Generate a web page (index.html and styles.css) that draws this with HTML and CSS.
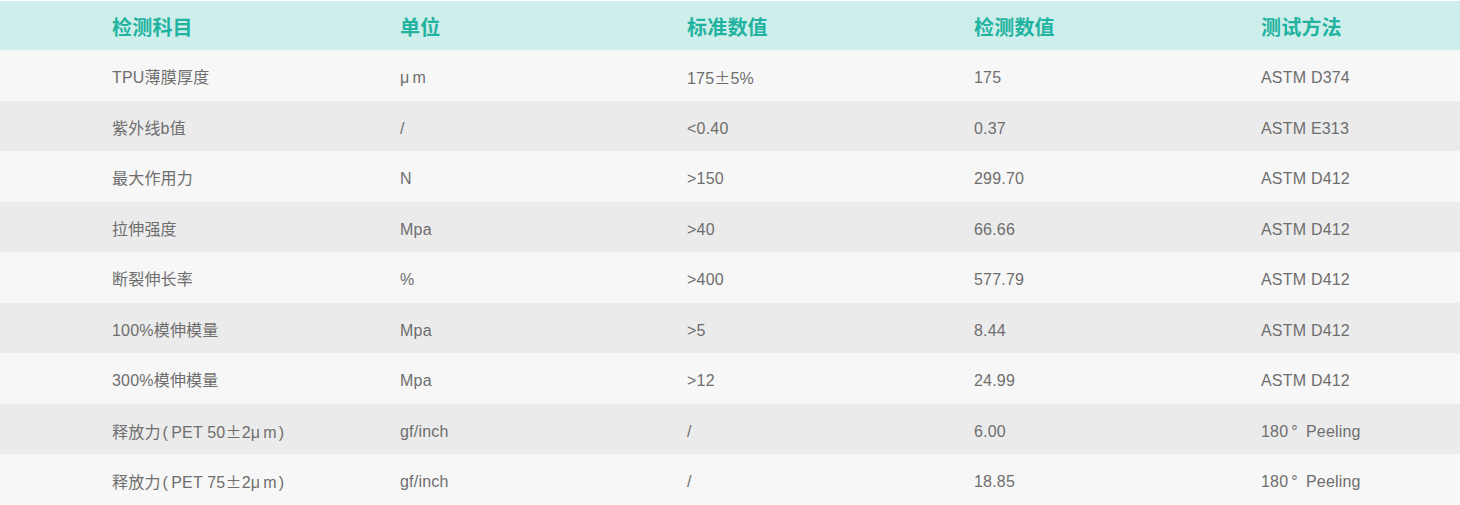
FILE: index.html
```html
<!DOCTYPE html>
<html lang="zh">
<head>
<meta charset="utf-8">
<title>检测数据</title>
<link rel="stylesheet" href="styles.css">
</head>
<body>
<div class="table">
  <div class="row head">
    <div class="cell">检测科目</div>
    <div class="cell">单位</div>
    <div class="cell">标准数值</div>
    <div class="cell">检测数值</div>
    <div class="cell">测试方法</div>
  </div>
  <div class="row odd">
    <div class="cell">TPU薄膜厚度</div>
    <div class="cell"><span class="mu">μ</span>m</div>
    <div class="cell">175<span class="pm">±</span>5%</div>
    <div class="cell">175</div>
    <div class="cell">ASTM D374</div>
  </div>
  <div class="row even">
    <div class="cell">紫外线b值</div>
    <div class="cell">/</div>
    <div class="cell">&lt;0.40</div>
    <div class="cell">0.37</div>
    <div class="cell">ASTM E313</div>
  </div>
  <div class="row odd">
    <div class="cell">最大作用力</div>
    <div class="cell">N</div>
    <div class="cell">&gt;150</div>
    <div class="cell">299.70</div>
    <div class="cell">ASTM D412</div>
  </div>
  <div class="row even">
    <div class="cell">拉伸强度</div>
    <div class="cell">Mpa</div>
    <div class="cell">&gt;40</div>
    <div class="cell">66.66</div>
    <div class="cell">ASTM D412</div>
  </div>
  <div class="row odd">
    <div class="cell">断裂伸长率</div>
    <div class="cell">%</div>
    <div class="cell">&gt;400</div>
    <div class="cell">577.79</div>
    <div class="cell">ASTM D412</div>
  </div>
  <div class="row even">
    <div class="cell">100%模伸模量</div>
    <div class="cell">Mpa</div>
    <div class="cell">&gt;5</div>
    <div class="cell">8.44</div>
    <div class="cell">ASTM D412</div>
  </div>
  <div class="row odd">
    <div class="cell">300%模伸模量</div>
    <div class="cell">Mpa</div>
    <div class="cell">&gt;12</div>
    <div class="cell">24.99</div>
    <div class="cell">ASTM D412</div>
  </div>
  <div class="row even">
    <div class="cell">释放力<span class="paren">(</span>PET 50<span class="pm">±</span>2<span class="mu">μ</span>m<span class="paren">)</span></div>
    <div class="cell">gf/inch</div>
    <div class="cell">/</div>
    <div class="cell">6.00</div>
    <div class="cell">180<span class="deg">°</span>Peeling</div>
  </div>
  <div class="row odd">
    <div class="cell">释放力<span class="paren">(</span>PET 75<span class="pm">±</span>2<span class="mu">μ</span>m<span class="paren">)</span></div>
    <div class="cell">gf/inch</div>
    <div class="cell">/</div>
    <div class="cell">18.85</div>
    <div class="cell">180<span class="deg">°</span>Peeling</div>
  </div>
</div>
</body>
</html>
```
FILE: styles.css
```css
html, body {
  margin: 0;
  padding: 0;
  background: #ffffff;
}
body {
  font-family: "Liberation Sans", "Noto Sans CJK SC", sans-serif;
  color: #6e6e6e;
  font-size: 16px;
}
.table {
  padding-top: 1px;
  display: flex;
  flex-direction: column;
}
.row {
  display: grid;
  grid-template-columns: 288px 287px 287px 287px 1fr;
  padding-left: 112px;
  align-items: center;
  height: 50.5px;
}
.row.head {
  height: 49px;
  background: #ceeeeb;
  color: #22b3a0;
  font-size: 20px;
  font-weight: bold;
  font-family: "Noto Sans CJK SC", sans-serif;
}
.row.head .cell {
  padding-top: 3px;
}
.row.odd {
  background: #f7f7f7;
}
.row.even {
  background: #ebebeb;
}
.cell {
  white-space: nowrap;
  line-height: 1;
  padding-top: 6px;
  letter-spacing: 0.2px;
}
.pm {
  font-family: "Noto Sans CJK SC", sans-serif;
}
.mu {
  margin-right: 3px;
}
.paren {
  margin: 0 3px 0 2px;
}
.deg {
  margin: 0 8px 0 3px;
}
```
